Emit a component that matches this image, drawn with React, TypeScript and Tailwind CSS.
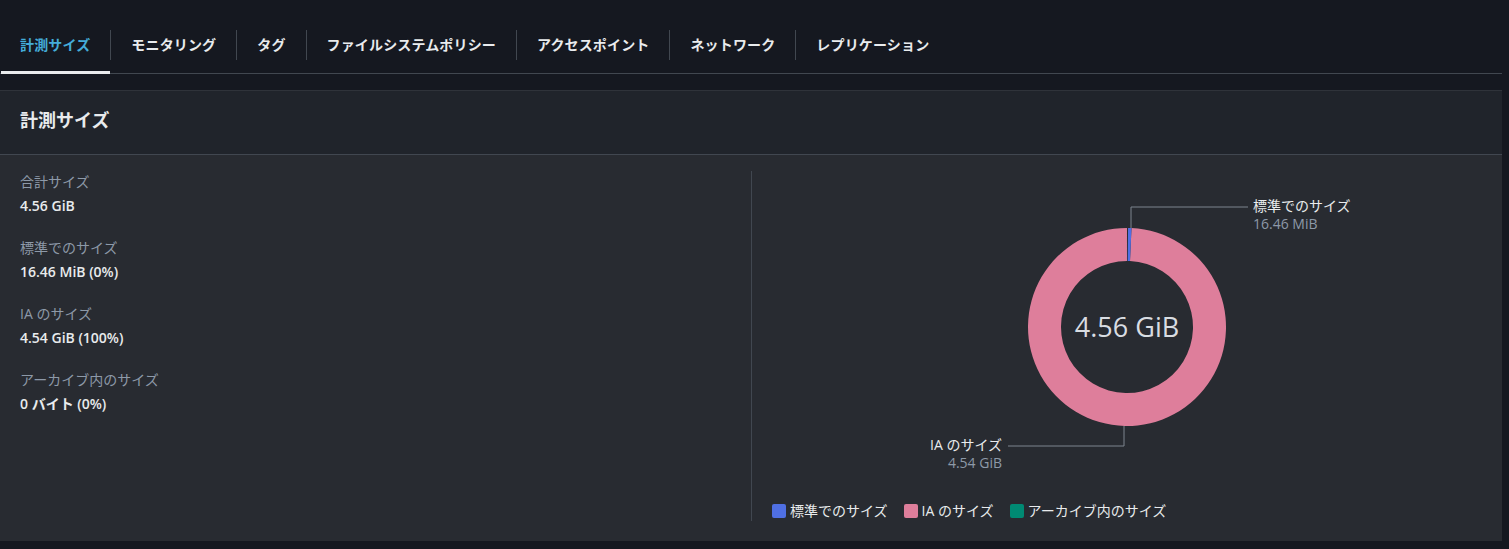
import React from "react";

const FONT = '"Open Sans", "Noto Sans CJK JP", sans-serif';

function arc(cx: number, cy: number, ro: number, ri: number, a0: number, a1: number) {
  const rad = (a: number) => ((a - 90) * Math.PI) / 180;
  const p = (r: number, a: number) => [cx + r * Math.cos(rad(a)), cy + r * Math.sin(rad(a))];
  const large = a1 - a0 > 180 ? 1 : 0;
  const [x0, y0] = p(ro, a0);
  const [x1, y1] = p(ro, a1);
  const [x2, y2] = p(ri, a1);
  const [x3, y3] = p(ri, a0);
  return `M${x0} ${y0} A${ro} ${ro} 0 ${large} 1 ${x1} ${y1} L${x2} ${y2} A${ri} ${ri} 0 ${large} 0 ${x3} ${y3} Z`;
}

const tabs = [
  "計測サイズ",
  "モニタリング",
  "タグ",
  "ファイルシステムポリシー",
  "アクセスポイント",
  "ネットワーク",
  "レプリケーション",
];

const stats = [
  ["合計サイズ", "4.56 GiB"],
  ["標準でのサイズ", "16.46 MiB (0%)"],
  ["IA のサイズ", "4.54 GiB (100%)"],
  ["アーカイブ内のサイズ", "0 バイト (0%)"],
];

function Donut() {
  const cx = 355;
  const cy = 156;
  return (
    <svg width="710" height="320" viewBox="0 0 710 320" style={{ fontFamily: FONT }}>
      <path d={arc(cx, cy, 99, 66, 2.6, 359.99)} fill="#de7e9b" />
      <path d={arc(cx, cy, 99, 66, 0.6, 2.6)} fill="#4f6fe3" />
      <polyline points="359,57 359,36 476,36" fill="none" stroke="#7d858f" strokeWidth="1" />
      <text x="481" y="40" fill="#e9ebed" fontSize="14">標準でのサイズ</text>
      <text x="481" y="58" fill="#8d99a8" fontSize="14">16.46 MiB</text>
      <polyline points="352,255 352,275 236,275" fill="none" stroke="#7d858f" strokeWidth="1" />
      <text x="230" y="279" fill="#e9ebed" fontSize="14" textAnchor="end">IA のサイズ</text>
      <text x="230" y="297" fill="#8d99a8" fontSize="14" textAnchor="end">4.54 GiB</text>
      <text x={cx} y={cy + 10} fill="#d9dde2" fontSize="27" textAnchor="middle">4.56 GiB</text>
    </svg>
  );
}

export default function App() {
  return (
    <div className="min-h-[549px] w-full bg-[#151820]" style={{ fontFamily: FONT }}>
      <div className="w-[1502px] pt-[16px]">
        <div className="flex h-[58px] items-center border-b border-[#414750]">
          {tabs.map((t, i) => (
            <React.Fragment key={t}>
              {i > 0 && <div className="h-[30px] w-px bg-[#414750]" />}
              <div
                className={
                  "relative flex h-full items-center px-5 text-[14px] font-bold tracking-[0.15px] " +
                  (i === 0 ? "text-[#44acd9]" : "text-[#e9ebed]")
                }
              >
                {t}
                {i === 0 && <div className="absolute bottom-[-1px] left-[1px] right-0 h-[3px] bg-[#e9ebed]" />}
              </div>
            </React.Fragment>
          ))}
        </div>
        <div className="mt-[16px] h-[451px] bg-[#282b31] border-t border-[#2f333a]">
          <div className="flex h-[64px] items-center border-b border-[#414750] bg-[#20242b] px-5 pb-[5px] text-[18px] font-bold text-[#e9ebed]">
            計測サイズ
          </div>
          <div className="flex pt-[16px] pb-[20px]">
            <div className="flex w-[751px] flex-col gap-[22px] px-5 pt-[1px]">
              {stats.map(([l, v]) => (
                <div key={l} className="flex flex-col gap-[4px]">
                  <div className="text-[14px] leading-[20px] text-[#8d99a8]">{l}</div>
                  <div className="text-[14px] leading-[20px] font-semibold text-[#e9ebed]">{v}</div>
                </div>
              ))}
            </div>
            <div className="h-[350px] w-px bg-[#414750]" />
            <div className="flex flex-1 flex-col px-5">
              <Donut />
              <div className="mt-[9px] flex items-center gap-[16px] text-[14px] text-[#e9ebed]">
                <div className="flex items-center gap-[4px]">
                  <span className="h-[14px] w-[14px] rounded-[2px] bg-[#4f6fe3]" />
                  標準でのサイズ
                </div>
                <div className="flex items-center gap-[4px]">
                  <span className="h-[14px] w-[14px] rounded-[2px] bg-[#de7e9b]" />
                  IA のサイズ
                </div>
                <div className="flex items-center gap-[4px]">
                  <span className="h-[14px] w-[14px] rounded-[2px] bg-[#008a73]" />
                  アーカイブ内のサイズ
                </div>
              </div>
            </div>
          </div>
        </div>
      </div>
    </div>
  );
}
